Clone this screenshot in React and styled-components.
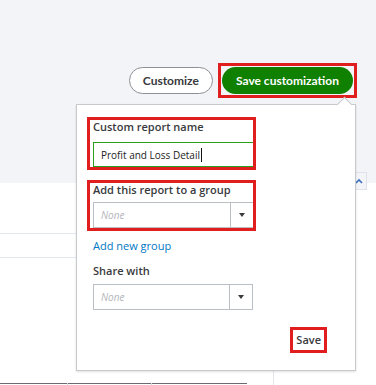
import React from 'react';
import styled, { createGlobalStyle } from 'styled-components';

const GlobalStyle = createGlobalStyle`
  html, body {
    margin: 0;
    padding: 0;
    background: #fff;
  }
  body {
    font-family: Lato, "Open Sans", Arial, sans-serif;
    color: #393a3d;
  }
`

const Page = styled.div`
  position: relative;
  width: 376px;
  height: 385px;
  overflow: hidden;
  background: #fff;
`

const Header = styled.div`
  position: relative;
  height: 183px;
  background: #f3f4f8;
`

const Toolbar = styled.div`
  display: flex;
  justify-content: flex-end;
  align-items: center;
  gap: 5px;
  padding-top: 63px;
  padding-right: 19px;
`

const Highlight = styled.div`
  border: 3px solid #e01e1e;
  padding: ${p => p.$pad || '1px'};
`

const PillButton = styled.button`
  height: 27px;
  border-radius: 14px;
  font-family: Lato, Arial, sans-serif;
  font-size: 12px;
  font-weight: 700;
  padding: 0 ${p => p.$px}px;
  cursor: pointer;
  border: ${p => (p.$primary ? 'none' : '1px solid #8d9096')};
  background: ${p => (p.$primary ? '#108000' : '#fff')};
  color: ${p => (p.$primary ? '#fff' : '#393a3d')};
`

const CollapseToggle = styled.div`
  position: absolute;
  right: 9px;
  bottom: -7px;
  width: 24px;
  height: 18px;
  border: 1px solid #dde2ec;
  background: #f3f4f8;
  display: flex;
  align-items: center;
  justify-content: flex-end;
  padding-right: 3px;
  box-sizing: border-box;
`

const Table = styled.div`
  width: 273px;
  height: 202px;
  border-right: 1px solid #e3e5ea;
  display: flex;
  flex-direction: column;
`

const Row = styled.div`
  height: ${p => p.$h}px;
  border-bottom: 1px solid #e1e7f0;
  box-sizing: border-box;
`

const TotalBar = styled.div`
  margin-top: auto;
  margin-bottom: 1px;
  width: 247px;
  height: 1px;
  background: #6b6c72;
  display: flex;
`

const Tick = styled.span`
  margin-left: ${p => p.$x}px;
  width: 1px;
  height: 3px;
  background: #d6d7db;
`

const Popover = styled.div`
  position: absolute;
  left: 76px;
  top: 104px;
  width: 280px;
  height: 267px;
  box-sizing: border-box;
  background: #fff;
  border: 1px solid #c8c9cd;
  box-shadow: 0 1px 2px rgba(0, 0, 0, 0.12);
  padding: 12px 0 0 10px;
  display: flex;
  flex-direction: column;

  &::before {
    content: '';
    position: absolute;
    top: -6px;
    right: 5px;
    width: 10px;
    height: 10px;
    background: #fff;
    border-left: 1px solid #c8c9cd;
    border-top: 1px solid #c8c9cd;
    transform: rotate(45deg);
  }
`

const FieldBox = styled.div`
  width: 169px;
  box-sizing: border-box;
  margin-bottom: ${p => p.$mb || 0}px;
`

const Plain = styled.div`
  padding-left: 6px;
  margin-bottom: ${p => p.$mb || 0}px;
`

const Label = styled.div`
  font-family: "Open Sans", Arial, sans-serif;
  font-size: 11px;
  font-weight: 600;
  color: #393a3d;
  line-height: 14px;
  margin: ${p => p.$m || '0 0 4px'};
`

const TextInput = styled.div`
  width: 160px;
  height: 25px;
  box-sizing: border-box;
  border: 1px solid #2ca01c;
  border-right: none;
  display: flex;
  align-items: center;
  padding-left: 7px;
  font-family: "Open Sans", Arial, sans-serif;
  font-size: 10px;
  color: #222;
`

const Cursor = styled.span`
  display: inline-block;
  width: 1px;
  height: 14px;
  background: #111;
  margin-left: 1px;
`

const Select = styled.div`
  width: 160px;
  height: 26px;
  box-sizing: border-box;
  border: 1px solid #babec5;
  display: flex;
  ${p => p.$openRight && 'border-right: none;'}
`

const SelectValue = styled.div`
  flex: 1;
  display: flex;
  align-items: center;
  padding-left: 7px;
  font-family: "Open Sans", Arial, sans-serif;
  font-size: 10px;
  font-style: italic;
  color: #b3b5ba;
`

const SelectCaret = styled.div`
  width: 22px;
  border-left: 1px solid #babec5;
  display: flex;
  align-items: center;
  justify-content: center;

  &::after {
    content: '';
    border-left: 3.5px solid transparent;
    border-right: 3.5px solid transparent;
    border-top: 4px solid #393a3d;
  }
`

const LinkText = styled.a`
  font-family: "Open Sans", Arial, sans-serif;
  font-size: 11px;
  color: #0077c5;
  text-decoration: none;
  line-height: 15px;
`

const Footer = styled.div`
  margin-top: auto;
  margin-bottom: 17px;
  align-self: flex-end;
  margin-right: 28px;
`

const TextButton = styled.button`
  display: block;
  border: none;
  background: #fff;
  font-family: "Open Sans", Arial, sans-serif;
  font-size: 11px;
  font-weight: 600;
  line-height: 14px;
  color: #393a3d;
  padding: 3px 3px;
  cursor: pointer;
`

function ChevronUp() {
  return (
    <svg width="8" height="6" viewBox="0 0 8 6">
      <path d="M1 5 L4 2 L7 5" fill="none" stroke="#3b6fc0" strokeWidth="1.6" />
    </svg>
  );
}

function Dropdown({ value, openRight }) {
  return (
    <Select $openRight={openRight}>
      <SelectValue>{value}</SelectValue>
      <SelectCaret />
    </Select>
  );
}

export default function App() {
  return (
    <Page>
      <GlobalStyle />
      <Header>
        <Toolbar>
          <PillButton $px={13}>Customize</PillButton>
          <Highlight $pad="1px">
            <PillButton $primary $px={14}>Save customization</PillButton>
          </Highlight>
        </Toolbar>
        <CollapseToggle>
          <ChevronUp />
        </CollapseToggle>
      </Header>

      <Table>
        <Row $h={51} />
        <Row $h={24} />
        <TotalBar>
          <Tick $x={67} />
          <Tick $x={83} />
        </TotalBar>
      </Table>

      <Popover>
        <FieldBox $mb={10}>
          <Highlight $pad="0 0 0 3px">
            <Label $m="0 0 8px">Custom report name</Label>
            <TextInput>
              Profit and Loss Detail<Cursor />
            </TextInput>
          </Highlight>
        </FieldBox>

        <FieldBox $mb={3}>
          <Highlight $pad="0 0 0 3px">
            <Label $m="0 0 5px">Add this report to a group</Label>
            <Dropdown value="None" openRight />
          </Highlight>
        </FieldBox>

        <Plain $mb={11}>
          <LinkText href="#">Add new group</LinkText>
        </Plain>

        <Plain>
          <Label $m="0 0 6px">Share with</Label>
          <Dropdown value="None" />
        </Plain>

        <Footer>
          <Highlight $pad="0">
            <TextButton>Save</TextButton>
          </Highlight>
        </Footer>
      </Popover>
    </Page>
  );
}
